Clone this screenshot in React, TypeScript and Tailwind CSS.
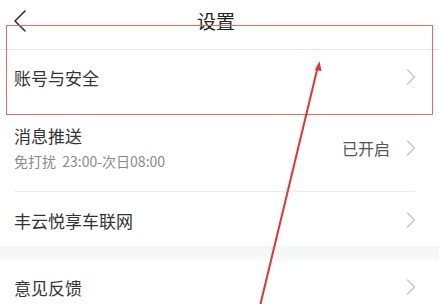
import React from "react";

const Chevron = () => (
  <svg width="10" height="16" viewBox="0 0 10 16" fill="none">
    <polyline points="1.5,1 8.5,8 1.5,15" stroke="#c4c4c4" strokeWidth="1.4" strokeLinecap="round" strokeLinejoin="round" />
  </svg>
);

export default function App() {
  return (
    <div
      className="relative w-[439px] h-[304px] overflow-hidden bg-white text-[#333]"
      style={{ fontFamily: '"Noto Sans CJK SC", "Noto Sans", sans-serif' }}
    >
      {/* header */}
      <div className="h-[50px] border-b border-[#e6e6e6] flex items-start">
        <div className="relative h-[41px] w-full flex items-center justify-center pr-[7px]">
          <div className="absolute left-[13px] top-[10px]">
            <svg width="14" height="22" viewBox="0 0 14 22" fill="none">
              <polyline points="12,1 2,11 12,21" stroke="#333" strokeWidth="1.6" strokeLinecap="round" strokeLinejoin="round" />
            </svg>
          </div>
          <span className="text-[19px] leading-none text-[#222]">设置</span>
        </div>
      </div>

      {/* row 1 */}
      <div className="h-[54px] flex items-center justify-between pl-[14px] pr-[23px]">
        <span className="text-[17px] leading-none">账号与安全</span>
        <Chevron />
      </div>

      {/* row 2 */}
      <div className="h-[87px] flex items-center justify-between pl-[14px] pr-[23px]">
        <div className="flex flex-col gap-[10px]">
          <span className="text-[17px] leading-none">消息推送</span>
          <span className="text-[14px] leading-none text-[#8a8a8a] whitespace-pre">免打扰  23:00-次日08:00</span>
        </div>
        <div className="flex items-center gap-[16px]">
          <span className="text-[16px] leading-none text-[#555]">已开启</span>
          <Chevron />
        </div>
      </div>
      <div className="ml-[14px] mr-[24px] h-px bg-[#ededed]" />

      {/* row 3 */}
      <div className="h-[54px] flex items-center justify-between pl-[14px] pr-[23px] pt-[2px]">
        <span className="text-[17px] leading-none">丰云悦享车联网</span>
        <Chevron />
      </div>

      {/* band */}
      <div className="h-[15px] bg-gradient-to-b from-[#f3f5f7] to-[#f8f9fa]" />

      {/* row 4 */}
      <div className="h-[52px] flex items-center justify-between pl-[14px] pr-[23px]">
        <span className="text-[17px] leading-none">意见反馈</span>
        <Chevron />
      </div>

      {/* annotation rectangle */}
      <div className="absolute left-[6px] top-[25px] w-[427px] h-[90px] border-[1.5px] border-[#e46a6a]" />

      {/* annotation arrow */}
      <svg className="absolute left-0 top-0" width="439" height="304" viewBox="0 0 439 304" fill="none">
        <line x1="260" y1="306" x2="318" y2="66" stroke="#e2342f" strokeWidth="2" />
        <polygon points="319.5,61 315,70 321.5,71" fill="#e2342f" />
      </svg>
    </div>
  );
}
